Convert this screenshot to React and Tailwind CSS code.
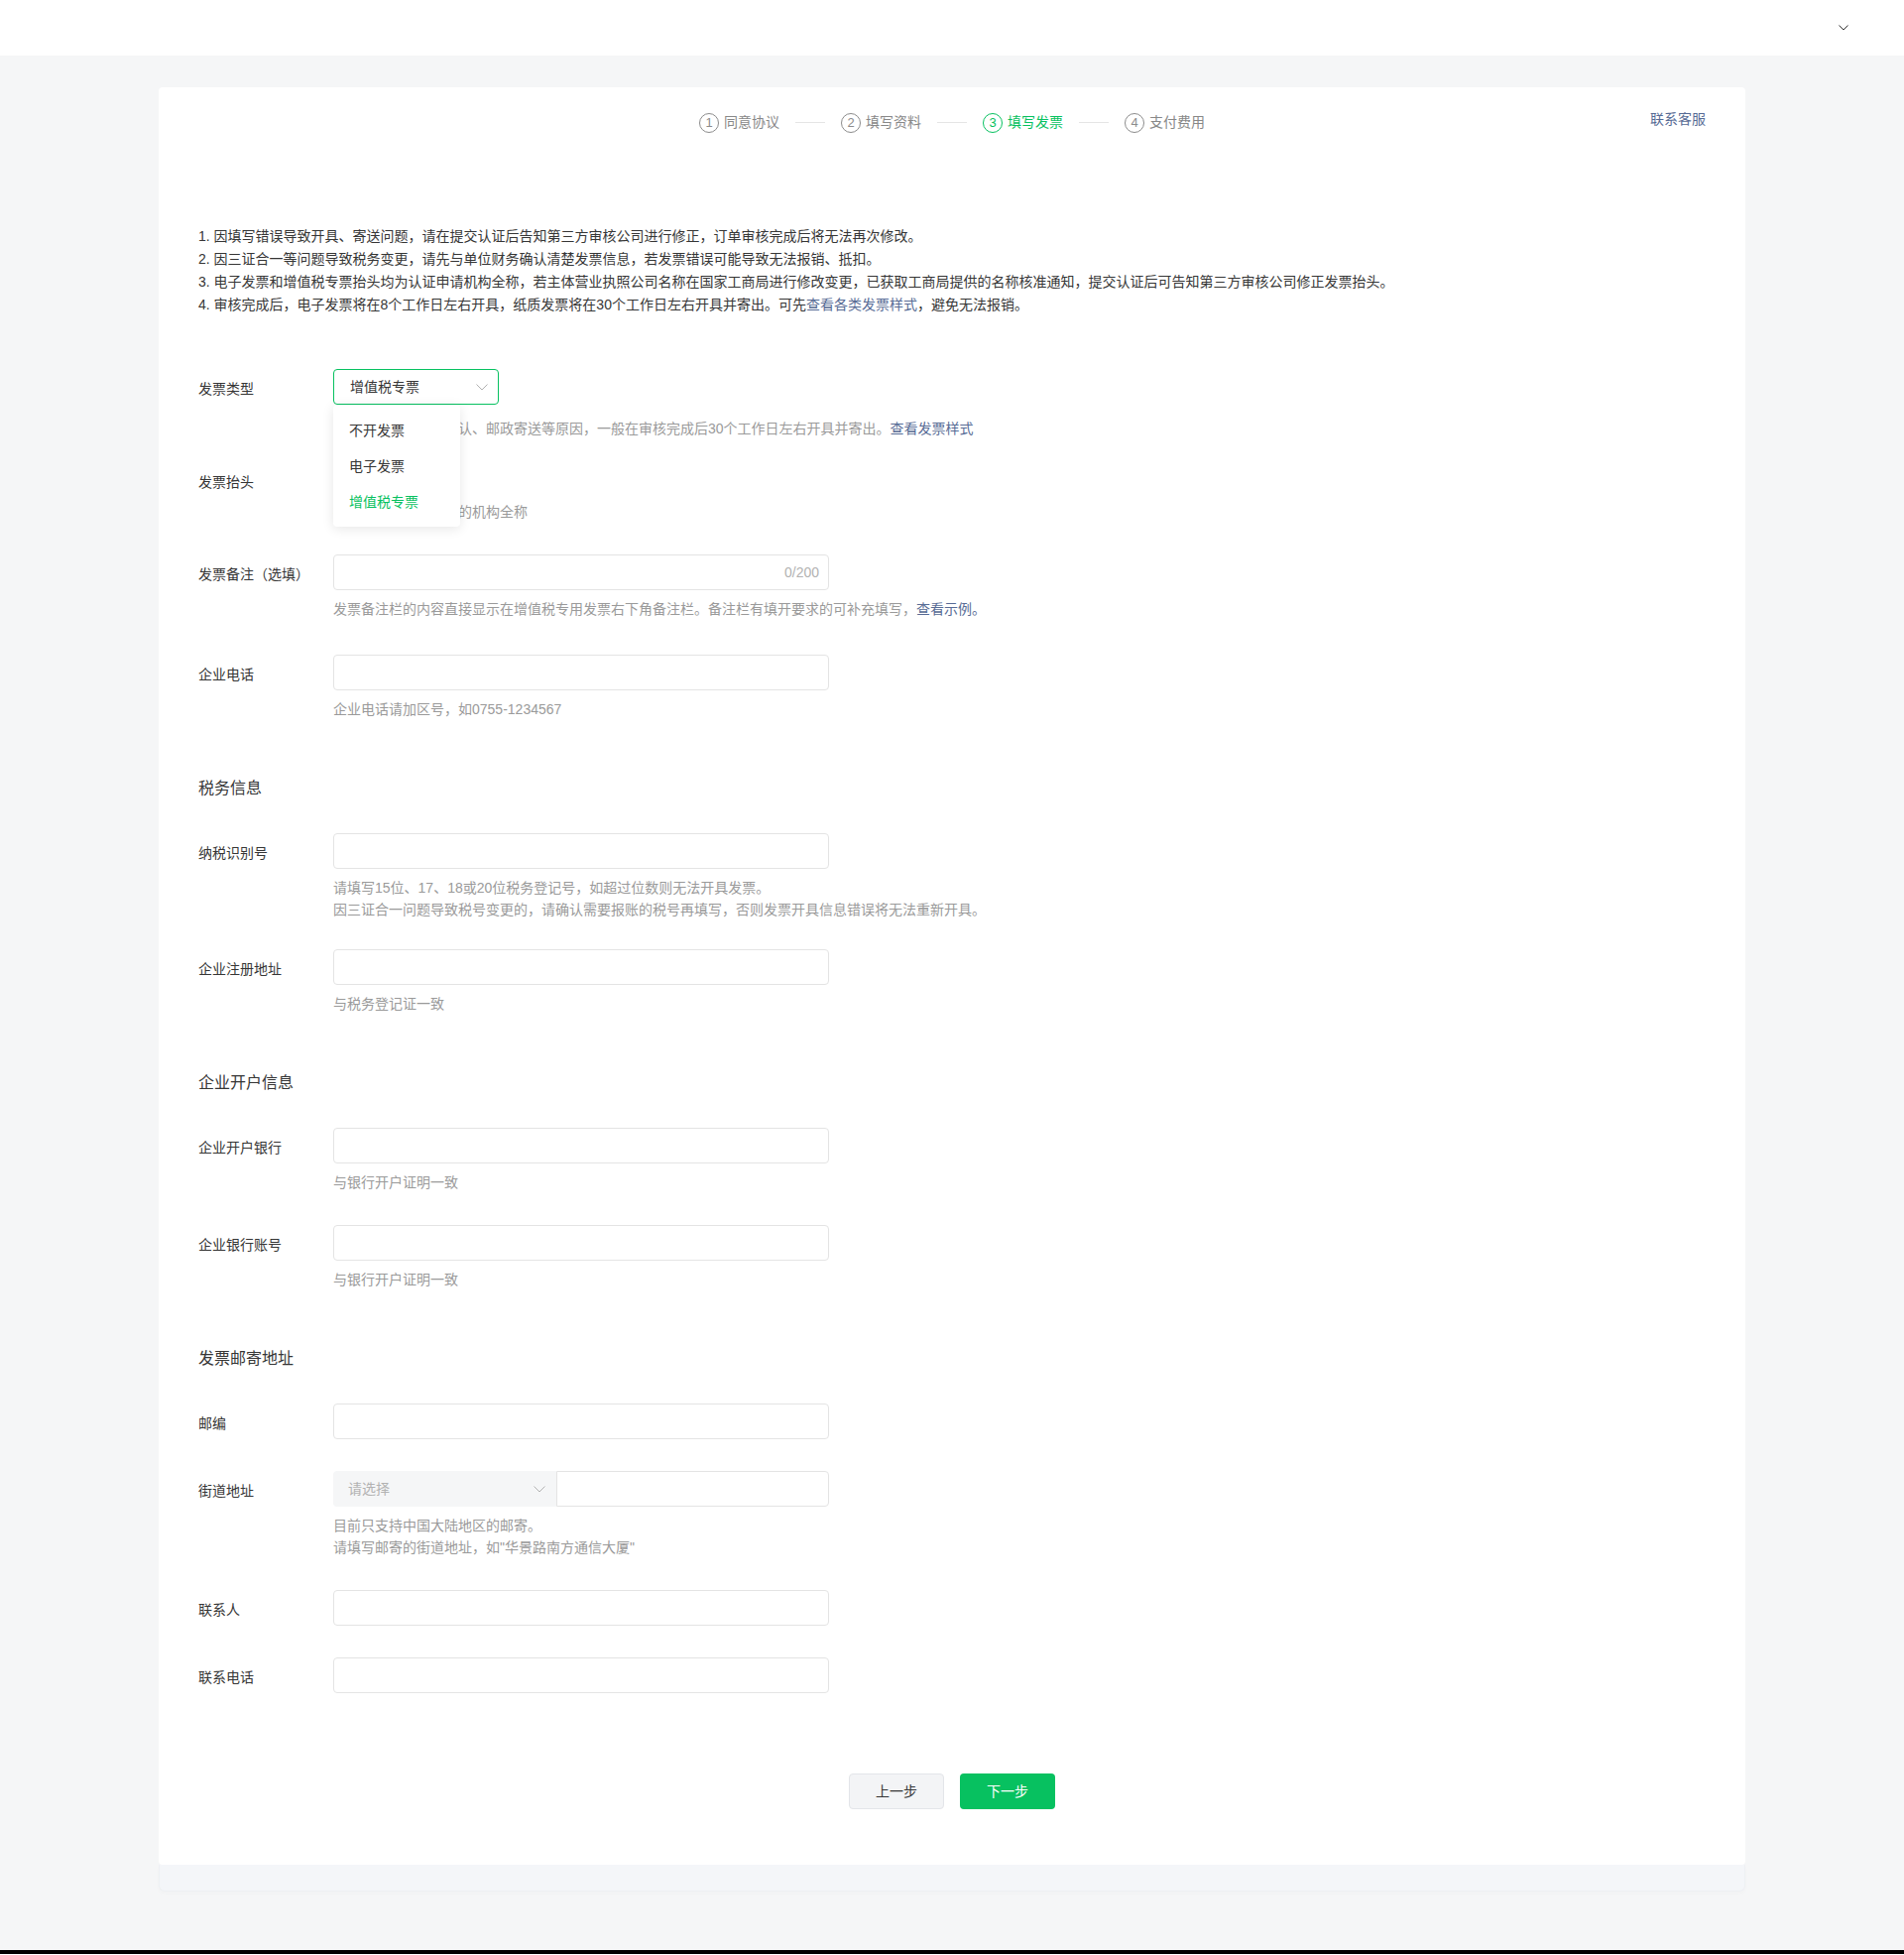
import React from "react";

const steps = [
  { n: 1, label: "同意协议" },
  { n: 2, label: "填写资料" },
  { n: 3, label: "填写发票", active: true },
  { n: 4, label: "支付费用" },
];

const Chevron = ({ color = "#b2b2b2" }) => (
  <svg width="12" height="7" viewBox="0 0 12 7" fill="none">
    <polyline points="0.5,0.5 6,6 11.5,0.5" stroke={color} strokeWidth="1" />
  </svg>
);

const Help = ({ children, className = "mt-2" }) => (
  <div className={`${className} whitespace-nowrap leading-[22px] text-[#9a9a9a]`}>
    {children}
  </div>
);

const TextInput = () => (
  <input
    type="text"
    className="block w-[500px] h-9 px-3 border border-[#e4e4e4] rounded-[4px] bg-white outline-none"
  />
);

// one form row: label column + control column
const Row = ({ label, children, className = "" }) => (
  <div className={`flex ${className}`}>
    <div className="w-[136px] shrink-0 h-9 pt-[5px] flex items-center">{label}</div>
    <div>{children}</div>
  </div>
);

const Title = ({ children }) => (
  <div className="mt-[57px] mb-[33px] text-[16px] leading-6">{children}</div>
);

export default function App() {
  return (
    <div className="bg-[#f5f6f7] text-[14px] text-[#363636] font-['Liberation_Sans','Noto_Sans_CJK_SC',sans-serif]">
      <header className="h-14 bg-white flex items-center justify-end pr-[56px]">
        <svg width="10" height="6" viewBox="0 0 10 6" fill="none">
          <polyline points="0.5,0.5 5,5 9.5,0.5" stroke="#333" strokeWidth="1" />
        </svg>
      </header>

      <main className="pt-8 px-[160px]">
        <div className="bg-white rounded-[4px] px-10 pt-[22px] pb-14">
          {/* steps */}
          <div className="grid grid-cols-[1fr_auto_1fr] items-center h-[22px]">
            <div />
            <div className="flex items-center">
              {steps.map((s, i) => (
                <React.Fragment key={s.n}>
                  {i > 0 && <div className="w-[30px] h-px bg-[#e5e5e5] mx-4" />}
                  <div className="flex items-center gap-[5px]">
                    <span
                      className={
                        s.active
                          ? "w-5 h-5 rounded-full border border-[#07c160] text-[#07c160] text-[13px] leading-none flex items-center justify-center"
                          : "w-5 h-5 rounded-full border border-[#8c8c8c] text-[#8c8c8c] text-[13px] leading-none flex items-center justify-center"
                      }
                    >
                      {s.n}
                    </span>
                    <span className={s.active ? "text-[#07c160]" : "text-[#888888]"}>
                      {s.label}
                    </span>
                  </div>
                </React.Fragment>
              ))}
            </div>
            <a className="justify-self-end mb-[6px] text-[#576b95] cursor-pointer">联系客服</a>
          </div>

          {/* notices */}
          <div className="mt-[95px] leading-[23px]">
            <p>1. 因填写错误导致开具、寄送问题，请在提交认证后告知第三方审核公司进行修正，订单审核完成后将无法再次修改。</p>
            <p>2. 因三证合一等问题导致税务变更，请先与单位财务确认清楚发票信息，若发票错误可能导致无法报销、抵扣。</p>
            <p>3. 电子发票和增值税专票抬头均为认证申请机构全称，若主体营业执照公司名称在国家工商局进行修改变更，已获取工商局提供的名称核准通知，提交认证后可告知第三方审核公司修正发票抬头。</p>
            <p>
              4. 审核完成后，电子发票将在8个工作日左右开具，纸质发票将在30个工作日左右开具并寄出。可先
              <a className="text-[#576b95] cursor-pointer">查看各类发票样式</a>，避免无法报销。
            </p>
          </div>

          {/* form */}
          <div className="mt-[53px]">
            <Row label="发票类型">
              <div className="relative w-[167px]">
                <div className="h-9 border border-[#07c160] rounded-[4px] flex items-center justify-between pl-4 pr-[10px]">
                  <span>增值税专票</span>
                  <Chevron />
                </div>
                <div className="absolute left-0 top-[36px] z-10 w-[128px] bg-white rounded-[4px] shadow-[0_2px_12px_rgba(0,0,0,0.1)] pt-2 pb-[7px]">
                  <div className="h-9 px-4 flex items-center">不开发票</div>
                  <div className="h-9 px-4 flex items-center">电子发票</div>
                  <div className="h-9 px-4 flex items-center text-[#07c160]">增值税专票</div>
                </div>
              </div>
              <Help className="mt-[13px]">
                因纸质发票需人工确认、邮政寄送等原因，一般在审核完成后30个工作日左右开具并寄出。
                <a className="text-[#576b95] cursor-pointer">查看发票样式</a>
              </Help>
            </Row>

            <div className="flex mt-8">
              <div className="w-[136px] shrink-0 h-[22px] leading-[22px]">发票抬头</div>
              <div>
                <div className="h-[22px]" />
                <Help>抬头须填写认证申请的机构全称</Help>
              </div>
            </div>

            <Row label="发票备注（选填）" className="mt-8">
              <div className="w-[500px] h-9 border border-[#e4e4e4] rounded-[4px] flex items-center pl-3 pr-[9px]">
                <input type="text" className="flex-1 min-w-0 h-full outline-none" />
                <span className="text-[#b2b2b2]">0/200</span>
              </div>
              <Help>
                发票备注栏的内容直接显示在增值税专用发票右下角备注栏。备注栏有填开要求的可补充填写，
                <a className="text-[#576b95] cursor-pointer">查看示例。</a>
              </Help>
            </Row>

            <Row label="企业电话" className="mt-[35px]">
              <TextInput />
              <Help>企业电话请加区号，如0755-1234567</Help>
            </Row>

            <Title>税务信息</Title>

            <Row label="纳税识别号">
              <TextInput />
              <Help>
                请填写15位、17、18或20位税务登记号，如超过位数则无法开具发票。
                <br />
                因三证合一问题导致税号变更的，请确认需要报账的税号再填写，否则发票开具信息错误将无法重新开具。
              </Help>
            </Row>

            <Row label="企业注册地址" className="mt-[29px]">
              <TextInput />
              <Help>与税务登记证一致</Help>
            </Row>

            <Title>企业开户信息</Title>

            <Row label="企业开户银行">
              <TextInput />
              <Help>与银行开户证明一致</Help>
            </Row>

            <Row label="企业银行账号" className="mt-8">
              <TextInput />
              <Help>与银行开户证明一致</Help>
            </Row>

            <Title>发票邮寄地址</Title>

            <Row label="邮编">
              <TextInput />
            </Row>

            <Row label="街道地址" className="mt-8">
              <div className="w-[500px] h-9 flex">
                <div className="w-[225px] shrink-0 bg-[#f5f6f7] rounded-l-[4px] flex items-center justify-between pl-[15px] pr-[11px] text-[#b2b2b2]">
                  <span>请选择</span>
                  <Chevron />
                </div>
                <input
                  type="text"
                  className="flex-1 min-w-0 px-3 border border-[#e4e4e4] rounded-r-[4px] outline-none"
                />
              </div>
              <Help>
                目前只支持中国大陆地区的邮寄。
                <br />
                请填写邮寄的街道地址，如"华景路南方通信大厦"
              </Help>
            </Row>

            <Row label="联系人" className="mt-8">
              <TextInput />
            </Row>

            <Row label="联系电话" className="mt-8">
              <TextInput />
            </Row>
          </div>

          <div className="mt-[81px] flex justify-center gap-4">
            <button className="w-24 h-9 rounded-[4px] bg-[#f3f4f6] border border-[#e3e5e9] text-[#353535]">
              上一步
            </button>
            <button className="w-24 h-9 rounded-[4px] bg-[#07c160] text-white">下一步</button>
          </div>
        </div>
        <div className="h-[27px] rounded-b-[6px] border-x border-b border-[#eef0f3] bg-[#f4f6f9] shadow-[0_2px_4px_rgba(0,0,0,0.02)]" />
      </main>

      <div className="h-[59px]" />
      <div className="h-1 bg-black" />
    </div>
  );
}
